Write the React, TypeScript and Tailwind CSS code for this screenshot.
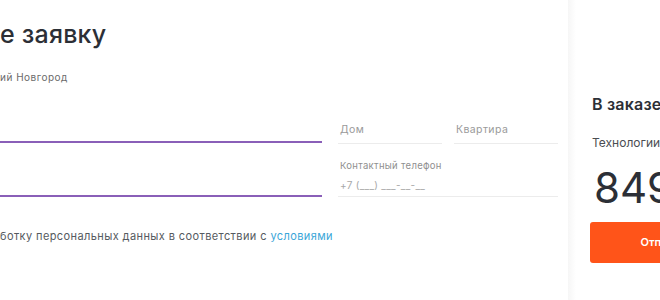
export default function App() {
  return (
    <div className="w-[660px] h-[300px] overflow-hidden bg-white flex font-['Inter',sans-serif]">
      {/* Form column */}
      <div className="w-[568px] shrink-0 pt-[18px]">
        <h2 className="text-[25px] leading-[32px] font-medium text-[#2c2f36] tracking-[0.2px]">е заявку</h2>
        <p className="mt-[20px] text-[10px] leading-[14px] tracking-[0.5px] text-[#6b6b6b]">ий Новгород</p>

        <div className="mt-[40px] flex">
          <div className="w-[322px] h-[19px] border-b-2 border-[#8a5fb8]" />
          <div className="ml-[16px] flex gap-[12px]">
            <div className="w-[104px] border-b border-[#ececec] pb-[7px] pl-[2px] text-[10.5px] leading-[12px] tracking-[0.4px] text-[#9a9a9a]">Дом</div>
            <div className="w-[104px] border-b border-[#ececec] pb-[7px] pl-[2px] text-[10.5px] leading-[12px] tracking-[0.4px] text-[#9a9a9a]">Квартира</div>
          </div>
        </div>

        <div className="mt-[16px] flex">
          <div className="w-[322px] h-[37px] border-b-2 border-[#8a5fb8]" />
          <div className="ml-[16px] w-[220px] border-b border-[#ececec] pb-[5px] pl-[2px]">
            <div className="text-[9.5px] leading-[12px] tracking-[0.3px] text-[#8f8f8f]">Контактный телефон</div>
            <div className="mt-[7px] text-[10px] leading-[12px] tracking-[0.3px] text-[#a8a8a8]">+7 (___) ___-__-__</div>
          </div>
        </div>

        <p className="mt-[32px] text-[11px] leading-[14px] tracking-[0.4px] text-[#555a60]">
          ботку персональных данных в соответствии с <span className="text-[#3aa6d8]">условиями</span>
        </p>
      </div>

      {/* divider shadow */}
      <div className="w-[8px] shrink-0 bg-gradient-to-r from-[#f6f6f6] to-white" />

      {/* Order summary */}
      <div className="flex-1 pl-[14px] pt-[95px] whitespace-nowrap">
        <div className="pl-[2px] text-[16px] leading-[18px] font-semibold tracking-[0.2px] text-[#2c2f36]">В заказе</div>
        <div className="mt-[23px] pl-[2px] text-[12px] leading-[14px] text-[#4a4d52]">Технологии</div>
        <div className="mt-[14px] pl-[4px] text-[42px] leading-[48px] text-[#2c2f36]">849</div>
        <button className="mt-[10px] w-[200px] h-[41px] rounded-[3px] bg-[#ff5419] text-white text-[11px] font-semibold">
          Отправить заявку
        </button>
      </div>
    </div>
  );
}
